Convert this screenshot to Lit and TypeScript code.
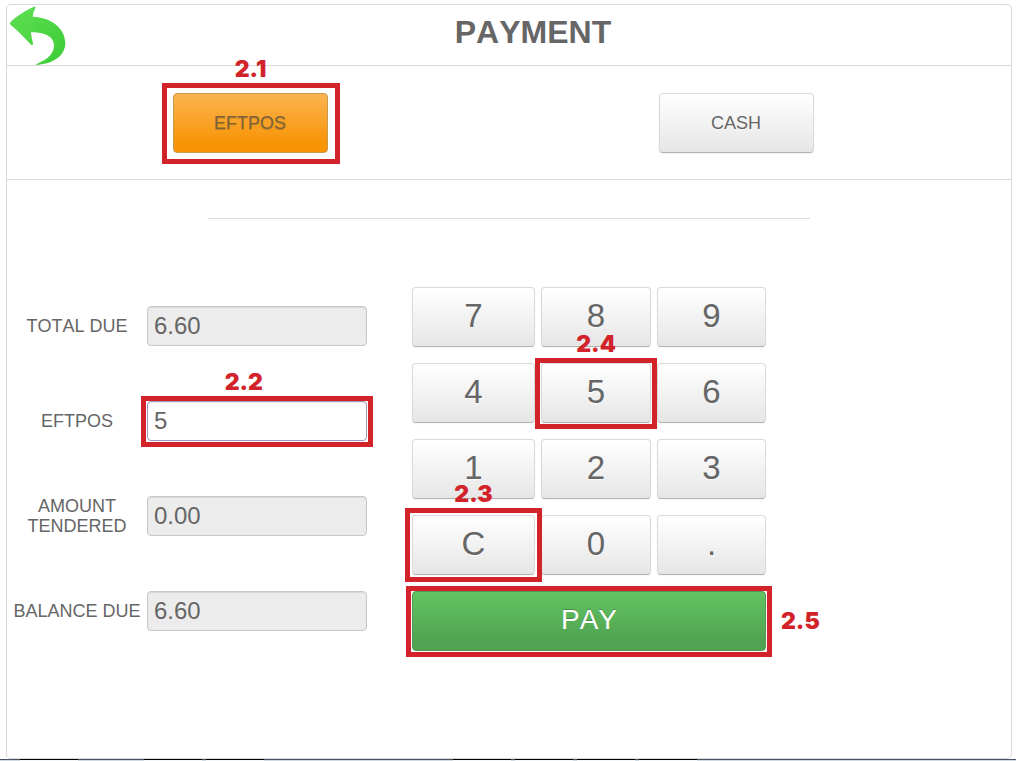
import { LitElement, html, css } from "lit";
import { customElement, property, state } from "lit/decorators.js";

/** Red frame with a step number, laid over the control it wraps. */
@customElement("step-callout")
class StepCallout extends LitElement {
  @property() step = "";
  @property() reach = "near";
  @property() side = "top";

  static styles = css`
    :host {
      display: grid;
      position: relative;
    }
    .frame {
      position: absolute;
      inset: -5px -6px -6px;
      z-index: 1;
      border: 5px solid #d2232a;
      pointer-events: none;
      display: flex;
      justify-content: center;
    }
    .frame.mid {
      inset: -7px;
    }
    .frame.far {
      inset: -10px -12px -11px -11px;
    }
    .step {
      position: absolute;
      bottom: calc(100% + 5px);
      font: 900 23px/28px Inter, "Liberation Sans", sans-serif;
      color: #d2232a;
    }
    .top-left .step {
      right: calc(50% - 6px);
    }
    .right .step {
      bottom: auto;
      top: 16px;
      left: calc(100% + 14px);
    }
  `;

  render() {
    return html`<slot></slot>
      <div class="frame ${this.reach} ${this.side}"><span class="step">${this.step}</span></div>`;
  }
}

interface Field {
  id: string;
  label: string;
  value: string;
  step?: string;
}

const KEYS: { key: string; step?: string; reach?: string }[] = [
  { key: "7" },
  { key: "8" },
  { key: "9" },
  { key: "4" },
  { key: "5", step: "2.4", reach: "near" },
  { key: "6" },
  { key: "1" },
  { key: "2" },
  { key: "3" },
  { key: "C", step: "2.3", reach: "mid" },
  { key: "0" },
  { key: "." },
];

@customElement("app-root")
class AppRoot extends LitElement {
  @state() private tendered = "5";

  static styles = css`
    :host {
      display: flex;
      flex-direction: column;
      min-height: 100vh;
      background: #fff;
      color: #666;
      font-family: "Liberation Sans", Arial, sans-serif;
      font-size: 18px;
      line-height: 20px;
      font-kerning: none;
    }
    * {
      box-sizing: border-box;
    }
    .panel {
      flex: 1;
      margin: 4px 4px 0 6px;
      border: 1px solid #d9d9d9;
      border-radius: 5px;
    }
    .header {
      display: flex;
      align-items: center;
      padding-right: 12px;
      border-bottom: 1px solid #d9d9d9;
    }
    .back {
      width: 60px;
      height: 60px;
      padding: 0;
      border: 0;
      background: none;
    }
    .back svg {
      display: block;
      width: 60px;
      height: 60px;
    }
    .title {
      flex: 1;
      margin: 0;
      padding-bottom: 6px;
      text-align: center;
      font-size: 32px;
      line-height: 40px;
    }
    .methods {
      display: grid;
      grid-template-columns: 1fr 1fr;
      justify-items: center;
      padding: 27px 32px 26px 0;
      border-bottom: 1px solid #d9d9d9;
    }
    .btn {
      width: 100%;
      height: 60px;
      padding: 0;
      border: 1px solid #dadada;
      border-bottom-color: #b3b3b3;
      border-radius: 4px;
      background: linear-gradient(#fff, #e6e6e6);
      box-shadow: inset 0 1px 0 #fff, 0 1px 2px rgba(0, 0, 0, 0.05);
      color: #666;
      font-family: inherit;
      font-size: 18px;
      line-height: 20px;
      font-kerning: none;
      text-shadow: 0 1px 1px rgba(255, 255, 255, 0.75);
    }
    .method {
      width: 155px;
    }
    .chosen {
      border-color: #c99a4e;
      background: linear-gradient(#fbb450, #f89406 85%);
      box-shadow: none;
      color: #7d6238;
      text-shadow: 0 1px 1px rgba(80, 60, 20, 0.3);
    }
    .rule {
      margin: 38px 20% 0;
      border: 0;
      border-top: 1px solid #dcdcdc;
    }
    .entry {
      display: grid;
      grid-template-columns: 360fr 354fr 200fr;
      column-gap: 45px;
      align-items: start;
      margin-top: 68px;
    }
    .fields {
      display: grid;
      grid-template-columns: 140px 1fr;
      align-items: center;
      row-gap: 55px;
      padding-top: 19px;
    }
    .label {
      height: 40px;
      display: flex;
      align-items: center;
      justify-content: center;
      text-align: center;
    }
    .value {
      width: 100%;
      height: 40px;
      padding: 0 6px;
      border: 1px solid #c8c8c8;
      border-radius: 4px;
      background: #fff;
      box-shadow: inset 0 1px 1px rgba(0, 0, 0, 0.08);
      color: #666;
      font-family: inherit;
      font-size: 24px;
      outline: none;
    }
    .value:read-only {
      background: #ececec;
    }
    .value:not(:read-only) {
      border-color: #9c97bd;
    }
    .keypad {
      display: grid;
      grid-template-columns: 123fr 110fr 109fr;
      gap: 16px 6px;
    }
    .key {
      padding-bottom: 2px;
      font-size: 33px;
      line-height: 40px;
    }
    .pay-row {
      grid-column: 1 / -1;
    }
    .pay {
      padding-bottom: 2px;
      border-color: #4f9a52;
      background: linear-gradient(#62c462, #51a351 85%);
      box-shadow: none;
      color: #fff;
      font-size: 28px;
      line-height: 40px;
      text-shadow: 0 -1px 0 rgba(0, 0, 0, 0.25);
    }
    .taskbar {
      display: flex;
      gap: 4px;
      height: 2px;
      padding-left: 20px;
      border-top: 1px solid #47545f;
      background: #cfdae3;
    }
    .task {
      width: 58px;
      height: 2px;
      margin-top: -1px;
      border-top: 1px solid #000;
      background: #f4f6f8;
    }
    .task.apart {
      margin-left: 62px;
    }
    .task.distant {
      margin-left: 185px;
    }
  `;

  private press(key: string) {
    this.tendered = key === "C" ? "" : this.tendered + key;
  }

  private renderKey({ key, step, reach }: (typeof KEYS)[number]) {
    const button = html`<button class="btn key" @click=${() => this.press(key)}>${key}</button>`;
    return step
      ? html`<step-callout step=${step} reach=${reach ?? "near"}>${button}</step-callout>`
      : button;
  }

  private renderField({ id, label, value, step }: Field) {
    const input = html`<input class="value" id=${id} .value=${value} ?readonly=${!step} />`;
    return html`<label class="label" for=${id}>${label}</label>
      ${step ? html`<step-callout step=${step} side="top-left">${input}</step-callout>` : input}`;
  }

  render() {
    const fields: Field[] = [
      { id: "total", label: "TOTAL DUE", value: "6.60" },
      { id: "eftpos", label: "EFTPOS", value: this.tendered, step: "2.2" },
      { id: "tendered", label: "AMOUNT TENDERED", value: "0.00" },
      { id: "balance", label: "BALANCE DUE", value: "6.60" },
    ];
    return html`
      <main class="panel">
        <header class="header">
          <button class="back" aria-label="Back">
            <svg viewBox="21 15 180 180" aria-hidden="true">
              <defs>
                <linearGradient id="leaf" x1="0" y1="0" x2="1" y2="1">
                  <stop offset="0" stop-color="#5fe052" />
                  <stop offset="1" stop-color="#3ccb37" />
                </linearGradient>
              </defs>
              <path
                fill="url(#leaf)"
                d="M31 67 C49 48 76 32 102 20 Q108 18 106 25 Q99 36 98 50 C154 52 194 84 196 127 C197 166 162 191 111 195 Q106 194 112 191 C145 178 162 159 162 136 C162 110 132 95 93 97 Q94 114 99 130 Q100 138 93 134 C71 112 55 93 32 75 Q28 71 31 67 Z"
              />
            </svg>
          </button>
          <h1 class="title">PAYMENT</h1>
        </header>
        <section class="methods">
          <step-callout step="2.1" reach="far">
            <button class="btn method chosen">EFTPOS</button>
          </step-callout>
          <button class="btn method">CASH</button>
        </section>
        <hr class="rule" />
        <section class="entry">
          <form class="fields">${fields.map((f) => this.renderField(f))}</form>
          <div class="keypad">
            ${KEYS.map((k) => this.renderKey(k))}
            <step-callout class="pay-row" step="2.5" side="right">
              <button class="btn pay">PAY</button>
            </step-callout>
          </div>
        </section>
      </main>
      <footer class="taskbar">
        <span class="task"></span>
        <span class="task apart"></span>
        <span class="task"></span>
        <span class="task distant"></span>
        <span class="task"></span>
        <span class="task"></span>
        <span class="task"></span>
      </footer>
    `;
  }
}
